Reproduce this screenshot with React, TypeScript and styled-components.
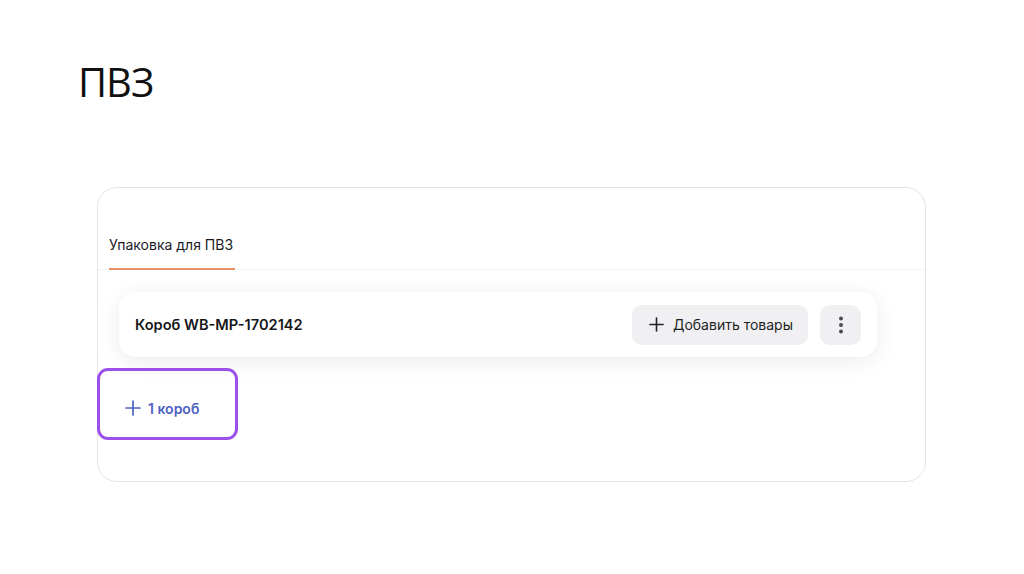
import React from "react";
import styled, { createGlobalStyle } from "styled-components";

const GlobalStyle = createGlobalStyle`
  body {
    margin: 0;
    background: #fff;
    font-family: Inter, "Noto Sans", sans-serif;
  }
`;

const Page = styled.main`
  width: 1024px;
  height: 574px;
  padding: 62px 0 0 78px;
  box-sizing: border-box;
`;

const Title = styled.h1`
  all: unset;
  display: block;
  font-family: "Open Sans", "Noto Sans", sans-serif;
  font-weight: 400;
  font-size: 40px;
  line-height: 40px;
  letter-spacing: -1px;
  color: #111;
`;

const Card = styled.section`
  margin: 85px 0 0 19px;
  width: 829px;
  height: 295px;
  box-sizing: border-box;
  border: 1px solid #e4e4e6;
  border-radius: 20px;
  padding: 47px 48px 0 21px;
`;

const TabBar = styled.div`
  display: flex;
  margin: 0 -48px 0 -21px;
  padding-left: 11px;
  border-bottom: 1px solid #f4f4f5;
`;

const Tab = styled.div`
  font-size: 14px;
  line-height: 20px;
  color: #1b1b1f;
  padding: 0 2px 13px 0;
  margin-bottom: -1px;
  border-bottom: 2px solid #e9926a;
`;

const BoxRow = styled.div`
  margin-top: 22px;
  height: 65px;
  display: flex;
  align-items: center;
  gap: 12px;
  padding: 0 16px;
  border-radius: 16px;
  background: #fff;
  box-shadow: 0 4px 22px rgba(0, 0, 0, 0.08);
`;

const BoxName = styled.div`
  flex: 1;
  font-size: 14.6px;
  font-weight: 600;
  color: #16161a;
`;

const GrayButton = styled.button<{ $square?: boolean }>`
  all: unset;
  display: flex;
  align-items: center;
  justify-content: center;
  gap: 9px;
  height: 40px;
  width: ${(p) => (p.$square ? "41px" : "auto")};
  padding: ${(p) => (p.$square ? "0" : "0 15px 0 17px")};
  border-radius: 10px;
  background: #f0f0f3;
  font-size: 14px;
  color: #1f1f24;
  cursor: pointer;
`;

const AddBox = styled.button`
  all: unset;
  box-sizing: border-box;
  margin: 11px 0 0 -22px;
  width: 141px;
  height: 72px;
  display: flex;
  align-items: center;
  gap: 7px;
  padding: 8px 0 0 25px;
  border: 3px solid #9b51e8;
  border-radius: 11px;
  font-size: 14px;
  font-weight: 600;
  color: #4e62bf;
  cursor: pointer;
`;

const Plus = ({ size, color }: { size: number; color: string }) => (
  <svg width={size} height={size} viewBox="0 0 16 16" fill="none">
    <path d="M8 1v14M1 8h14" stroke={color} strokeWidth="1.7" strokeLinecap="round" />
  </svg>
);

const Dots = () => (
  <svg width="6" height="18" viewBox="0 0 6 18">
    <circle cx="3" cy="2.5" r="2" fill="#4a4a50" />
    <circle cx="3" cy="9" r="2" fill="#4a4a50" />
    <circle cx="3" cy="15.5" r="2" fill="#4a4a50" />
  </svg>
);

export default function App() {
  return (
    <>
      <GlobalStyle />
      <Page>
        <Title>ПВЗ</Title>
        <Card>
          <TabBar>
            <Tab>Упаковка для ПВЗ</Tab>
          </TabBar>
          <BoxRow>
            <BoxName>Короб WB-MP-1702142</BoxName>
            <GrayButton>
              <Plus size={15} color="#1f1f24" />
              Добавить товары
            </GrayButton>
            <GrayButton $square>
              <Dots />
            </GrayButton>
          </BoxRow>
          <AddBox>
            <Plus size={16} color="#4e62bf" />1 короб
          </AddBox>
        </Card>
      </Page>
    </>
  );
}
